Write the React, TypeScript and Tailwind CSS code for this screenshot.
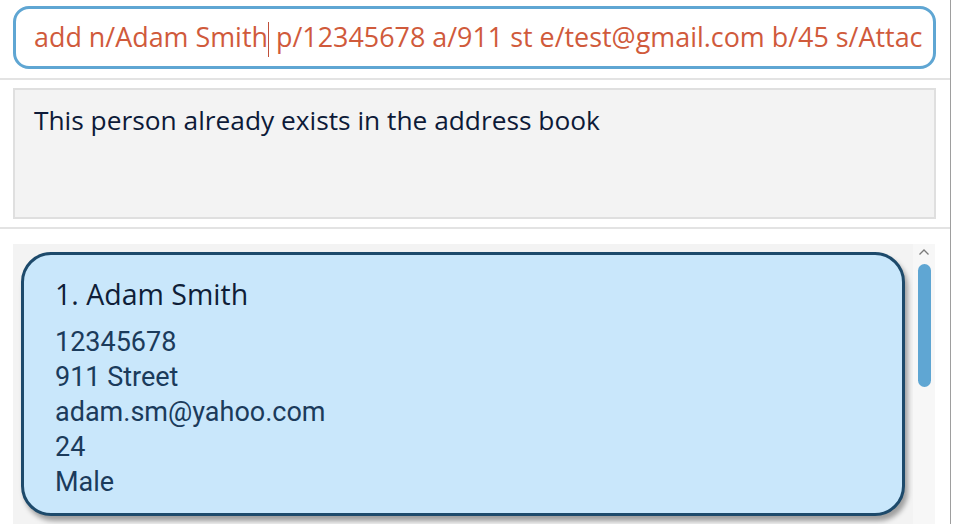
import React from 'react';

const segoe = { fontFamily: '"Open Sans", "Noto Sans", sans-serif' };

const details = ['12345678', '911 Street', 'adam.sm@yahoo.com', '24', 'Male'];

const App: React.FC = () => {
  return (
    <div className="flex w-[953px] h-[524px] overflow-hidden bg-white">
      <div className="flex flex-col w-[950px] h-full">
        {/* command box */}
        <div className="px-[13px] pt-[6px] pr-[14px]">
          <div className="flex items-center h-[63px] border-[3px] border-[#5fa6d3] rounded-[16px] bg-white pl-[18px] overflow-hidden whitespace-nowrap">
            <span className="text-[#d05a3b] text-[26.9px]" style={segoe}>
              add n/Adam Smith
              <span className="inline-block w-px h-[35px] bg-[#c0503a] align-middle -mt-[2px]" />
              {' '}p/12345678 a/911 st e/test@gmail.com b/45 s/Attac
            </span>
          </div>
        </div>
        <div className="mt-[9px] h-[2px] bg-[#e3e3e3]" />

        {/* result box */}
        <div className="px-[13px] pt-[8px] pr-[14px]">
          <div className="h-[131px] border-2 border-[#dfdfdf] bg-[#f3f3f3] pl-[19px] pt-[11px]">
            <p className="text-[#0d1a38] text-[26.3px]" style={segoe}>
              This person already exists in the address book
            </p>
          </div>
        </div>
        <div className="mt-[8px] h-[2px] bg-[#e3e3e3]" />

        {/* person list */}
        <div className="flex flex-1 ml-[13px] mr-[15px] mt-[15px] bg-[#f3f3f3]">
          <div className="flex-1 pl-[8px] pt-[8px] pr-[8px]">
            <div className="h-[264px] rounded-[30px] border-[3px] border-[#1d4a6b] bg-[#c9e7fb] shadow-[3px_5px_5px_rgba(0,0,0,0.35)] pl-[31px] pt-[20px]">
              <div className="text-[#0f1e38] text-[28.5px] leading-[38px] mb-[12px]" style={segoe}>
                1. Adam Smith
              </div>
              {details.map((d) => (
                <div
                  key={d}
                  className="text-[#1b3b5b] text-[27px] leading-[35px]"
                  style={{ fontFamily: 'Roboto, "Noto Sans", sans-serif' }}
                >
                  {d}
                </div>
              ))}
            </div>
          </div>
          <div className="flex flex-col items-center w-[22px] bg-[#f7f7f7]">
            <svg width="12" height="8" viewBox="0 0 12 8" className="mt-[4px]">
              <path d="M1.5 6.5 L6 2 L10.5 6.5" fill="none" stroke="#7a7a7a" strokeWidth="1.3" />
            </svg>
            <div className="mt-[8px] w-[13px] h-[123px] rounded-full bg-[#5fa6d3]" />
          </div>
        </div>
      </div>
      <div className="w-px h-full bg-[#9e9e9e]" />
      <div className="w-[2px] h-full bg-white" />
    </div>
  );
};

export default App;
